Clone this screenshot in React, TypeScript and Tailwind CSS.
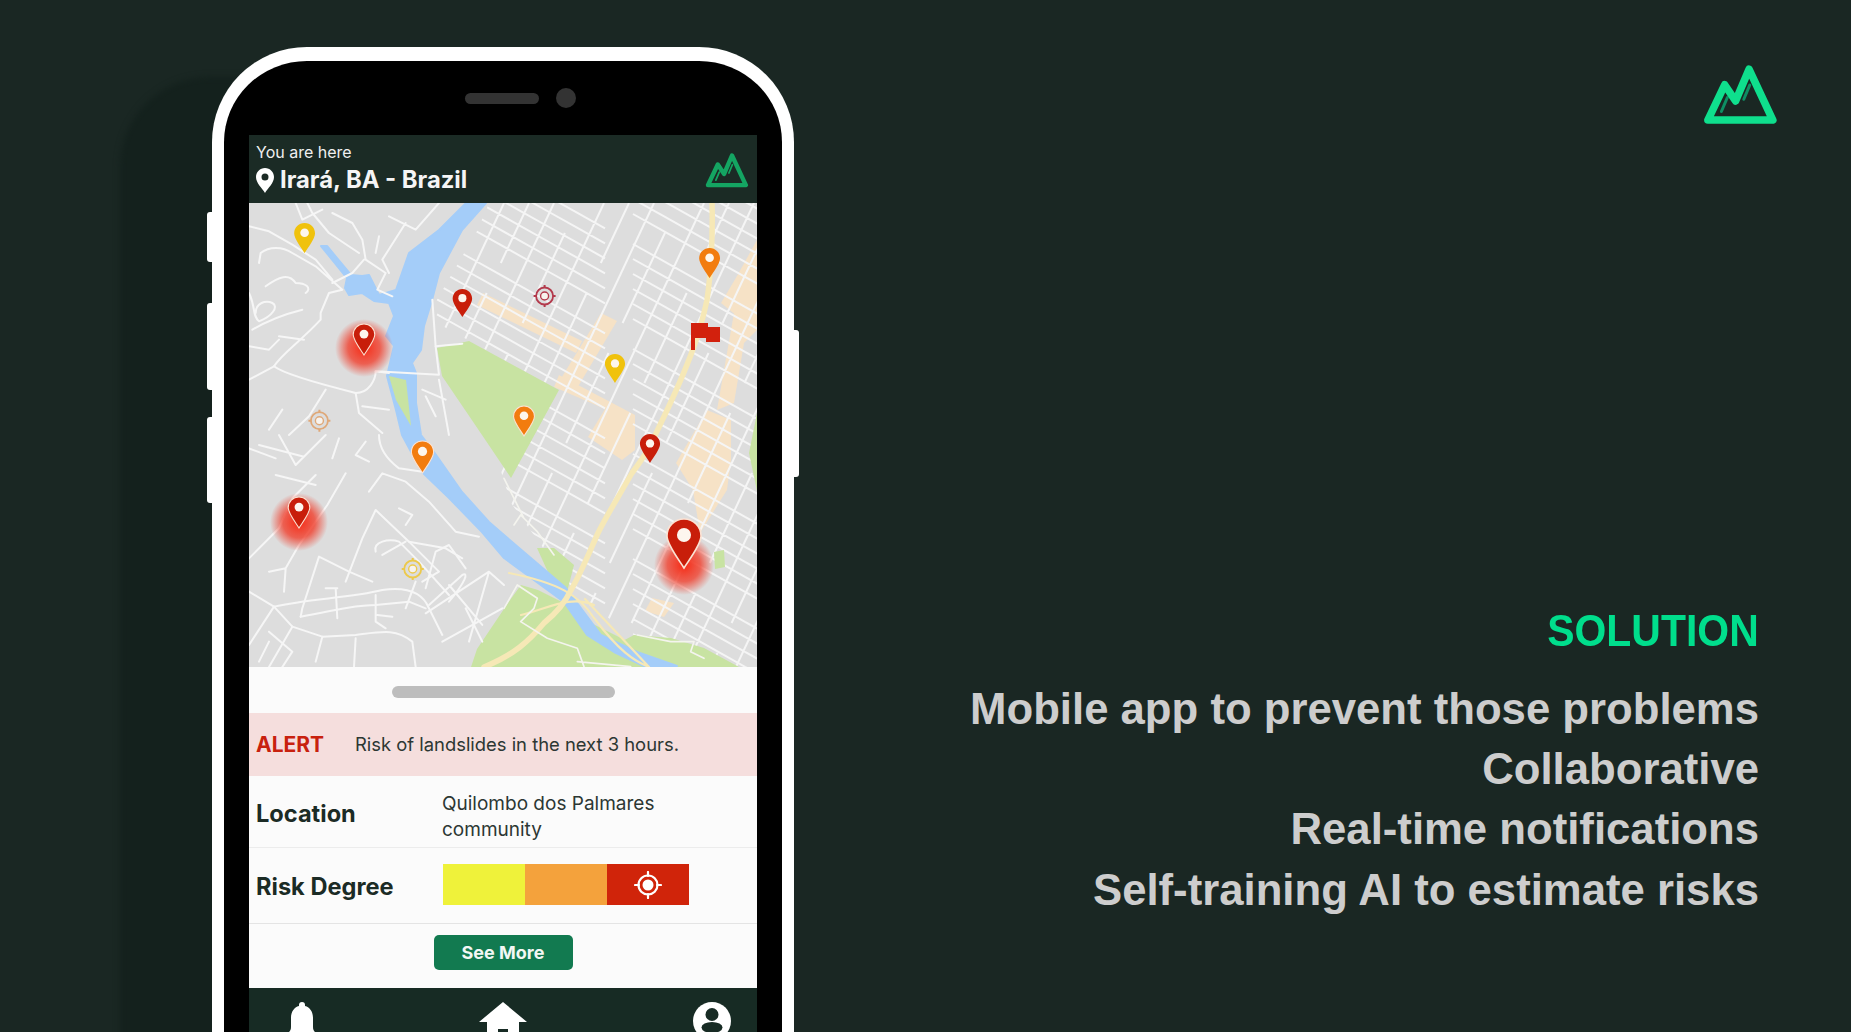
import { useMemo } from "react";

const LOGO_FONT = "font-['Liberation_Sans',Arial,sans-serif]";

const MountainLogo = ({ className, stroke, inner }: { className: string; stroke: string; inner: string }) => (
  <svg viewBox="68 44 224 182" className={className} fill="none">
    <path d="M122 185 140 143M190 148 208 105" stroke={inner} strokeWidth="9" strokeLinecap="round" />
    <path d="M81 211 132 104 165 153 206 57 278 211Z" stroke={stroke} strokeWidth="23" strokeLinejoin="round" />
  </svg>
);

type PinData = { x: number; top: number; tip: number; color: string; outline?: boolean; halo?: number };

// image coordinates minus map origin (249, 203)
const pins: PinData[] = [
  { x: 55.6, top: 20, tip: 50, color: "#f0c20c" },
  { x: 460.6, top: 45, tip: 75, color: "#f27c0f" },
  { x: 213.4, top: 86, tip: 114, color: "#c81e0a" },
  { x: 115, top: 121, tip: 152, color: "#c81e0a", outline: true, halo: 145 },
  { x: 366, top: 151, tip: 180, color: "#f0c20c" },
  { x: 275, top: 203, tip: 233, color: "#f27c0f", outline: true },
  { x: 173.5, top: 238, tip: 270, color: "#f27c0f", outline: true },
  { x: 401, top: 231, tip: 260, color: "#c81e0a" },
  { x: 50, top: 294, tip: 325, color: "#c81e0a", outline: true, halo: 319 },
];

const Pin = ({ x, top, tip, color, outline }: PinData) => {
  const h = tip - top;
  const s = h / 46;
  return (
    <g transform={`translate(${x - 16 * s} ${top}) scale(${s})`}>
      <path
        d="M16 0C7 0 0 7 0 16c0 8 11 22 16 30 5-8 16-22 16-30C32 7 25 0 16 0Z"
        fill={color}
        stroke={outline ? "#fbe3d4" : "none"}
        strokeWidth={outline ? 1.6 : 0}
      />
      <circle cx="16" cy="15" r="6.6" fill="#fdf6ee" />
    </g>
  );
};

const Target = ({ x, y, color }: { x: number; y: number; color: string }) => (
  <g transform={`translate(${x} ${y})`} fill="none" stroke={color}>
    <circle r="8.5" strokeWidth="1.8" />
    <circle r="4" fill="#f7f3ee" strokeWidth="1.4" />
    <path d="M0-11V-8M0 8V11M-11 0H-8M8 0H11" strokeWidth="2" />
  </g>
);

// the street grid east of the river, broken up so it does not look ruled
const useStreetGrid = () =>
  useMemo(() => {
    const out: string[] = [];
    for (let i = -34; i < 34; i++) {
      const c = i * 15 + 6;
      for (let j = 0; j < 14; j++) {
        if ((i * 7 + j * 13 + i * j) % 7 === 0) continue;
        const x1 = 160 + j * 28;
        const x2 = x1 + 28;
        out.push(`M${x1} ${(0.56 * x1 + c).toFixed(1)}L${x2} ${(0.56 * x2 + c).toFixed(1)}`);
      }
    }
    for (let i = 0; i < 36; i++) {
      const x0 = 230 + i * 25;
      for (let j = 0; j < 16; j++) {
        if ((i * 5 + j * 11 + i * j) % 4 === 0) continue;
        const y1 = j * 30;
        const y2 = y1 + 30;
        out.push(`M${(x0 - 0.47 * y1).toFixed(1)} ${y1}L${(x0 - 0.47 * y2).toFixed(1)} ${y2}`);
      }
    }
    return out.join("");
  }, []);

const MapView = () => {
  const grid = useStreetGrid();
  return (
    <svg viewBox="0 0 508 464" className="block h-[464px] w-[508px] blur-[0.5px]">
      <defs>
        <radialGradient id="halo">
          <stop offset="0%" stopColor="#f62a14" />
          <stop offset="55%" stopColor="#f0402e" stopOpacity="0.8" />
          <stop offset="100%" stopColor="#f0402e" stopOpacity="0" />
        </radialGradient>
        <clipPath id="town">
          <path d="M186 100 228 28 240 0H508V464H432L330 395 262 300 250 262 310 187 188 120Z" />
        </clipPath>
      </defs>
      <rect width="508" height="464" fill="#dddddd" />

      {/* blocks of town */}
      <g fill="#f6e2c6">
        <path d="M234 90 333 138 327 150 228 102Z" />
        <path d="M352 110 368 118 324 192 308 182Z" />
        <path d="M310 172 386 212 386 247 373 257 339 234 356 206 305 184Z" />
        <path d="M427 260 458 207 482 217 482 257 478 287 451 330 444 287Z" />
        <path d="M472 100 488 73 508 37V127L488 113Z" />
        <path d="M485 110 468 207 485 200 495 140 508 127V118Z" />
        <path d="M403 395 425 400 415 414 396 408Z" />
      </g>

      <path d={grid} clipPath="url(#town)" stroke="#f5f5f5" strokeWidth="2" fill="none" />

      {/* parks */}
      <g fill="#c8e3a2">
        <path d="M188 145 220 138 310 187 262 275 233 232 193 173Z" />
        <path d="M228 446 261 397 272 382 289 387 329 407 342 420 390 444 430 464H222Z" />
        <path d="M385 432 422 435 455 445 490 464H410L370 440Z" />
        <path d="M288 345 305 345 325 362 318 389 308 389Z" />
        <path d="M508 210 500 250 508 288Z" />
        <path d="M465 349 475 347 476 364 466 366Z" />
      </g>

      {/* river */}
      <path
        fill="#a4cdf9"
        stroke="#a4cdf9"
        strokeWidth="2"
        strokeLinejoin="round"
        d="M217 0H237L213 27 190 70 183 97 175 123 172 147 163 160 167 170V200L172 232 185 249 213 289 240 319 255 332 317 385 352 432 388 449 428 463H395L365 449 338 432 315 399 255 355 233 329 200 295 173 269 153 232 147 207 138 173 145 143 137 133 145 113 140 100 125 98 113 90 100 92 96 85 98 75 72 43H78L102 72 113 73 120 72 130 92 147 87 160 50 190 27Z"
      />
      <path fill="#c8e3a2" d="M140 173 157 177 162 223 147 197Z" />

      {/* highway and ramps */}
      <g fill="none" stroke="#f6e8b6" strokeLinecap="round">
        <path d="M463 0C464 30 462 70 458 97 452 125 444 154 410 224 398 250 392 258 383 270 368 296 358 312 349 330 340 350 332 370 322 387 315 402 305 412 295 420 280 438 265 452 235 464" strokeWidth="5.5" />
        <path d="M260 370C310 380 330 392 345 415 370 448 385 458 400 464M272 412C300 405 322 392 345 402M336 396 400 464" strokeWidth="2.2" />
      </g>

      {/* winding streets west of the river, traced from a 3x crop */}
      <g transform="scale(0.3333)" fill="none" stroke="#f6f6f6" strokeWidth="6" strokeLinecap="round" strokeLinejoin="round">
        <path d="M0 70 60 85 130 125 200 170 250 230M30 180 35 150C60 130 100 130 130 150L200 190 280 260 240 270 215 330V350C150 420 100 450 75 490L0 530" />
        <path d="M50 250C90 220 120 210 140 240 170 240 190 255 170 270M0 270C20 310 10 340 30 355 70 340 90 310 70 300 50 290 20 300 20 330" />
        <path d="M10 380C60 350 120 330 160 320M90 400 165 410M0 430 60 440 90 410" />
        <path d="M75 490C100 510 200 540 320 570 360 570 380 530 380 505L570 515M570 515 560 430 550 290" />
        <path d="M140 0 160 50 220 20M250 30 310 60 340 110 350 170 410 210 385 260 430 280M345 170 310 210 250 240M175 0 190 30 240 90 330 150" />
        <path d="M420 40 500 80 570 0M470 60 400 170 420 210M390 100 380 150M230 560 180 640 120 696M320 570 330 630 400 690M100 620 60 680M520 560 590 590M570 530 600 696M530 580 560 640M420 620 340 610" />
        <path d="M560 430 640 422M380 505 420 510" />
      </g>
      <g transform="translate(0 232) scale(0.3333)" fill="none" stroke="#f6f6f6" strokeWidth="6" strokeLinecap="round" strokeLinejoin="round">
        <path d="M0 370 90 280 130 190 200 120M80 120 200 150M0 40 80 70M30 30 165 65M90 0 140 90M230 0 140 90" />
        <path d="M290 115 235 210 150 330 110 400 60 410M110 400 105 470M350 20 320 60 360 80M270 10 250 70M390 0C390 40 410 70 450 100L520 110" />
        <path d="M360 170 400 115 470 140 540 200 620 290 690 305M210 365 160 520 155 545M210 365 300 410 370 440M290 440 340 310 380 225 480 320 570 410 520 440" />
        <path d="M380 350C370 320 420 310 450 320L510 380 600 480M400 360 470 320M450 220 490 240 470 270" />
        <path d="M0 470 75 515 130 575 220 605 320 600C400 590 440 580 490 620L500 696M75 515C180 490 300 490 400 465 470 455 520 470 540 520L580 600M155 545C250 530 300 510 380 510L480 500 530 520" />
        <path d="M75 515 0 630M130 575 60 696M260 460 265 550M230 460H265M60 590 130 650 100 696M30 680 60 620M220 605 200 680M320 610 315 696M380 480V560L410 580M385 540 430 545" />
        <path d="M530 535 720 410 765 450M580 620 760 520M650 520 700 620M600 450 700 570M720 410 660 620M540 510 640 420C660 410 650 440 600 500M480 320 590 340 640 370M530 460 560 350 600 330 650 400M500 440 470 520" />
      </g>
      <g transform="translate(255 232) scale(0.3333)" fill="none" stroke="#f4f4ee" strokeWidth="5" strokeLinecap="round" strokeLinejoin="round">
        <path d="M0 520 40 450 100 490 90 520 50 560 130 610 220 640 240 695M220 680 380 695M400 600 500 620 570 620 560 650 600 670" />
        <path d="M30 270 50 240 100 290 150 360M0 130 60 250" />
      </g>

      {/* pins */}
      {pins.filter((p) => p.halo).map((p) => (
        <circle key={`halo-${p.x}`} cx={p.x} cy={p.halo} r="29" fill="url(#halo)" />
      ))}
      <circle cx="435" cy="362" r="30" fill="url(#halo)" />
      <Target x={295.6} y={93} color="#b33a4c" />
      <Target x={70.4} y={217.7} color="#dfa878" />
      <Target x={163.7} y={366} color="#ecc94b" />
      {pins.map((p) => (
        <Pin key={`${p.x}-${p.top}`} {...p} />
      ))}
      <Pin x={435} top={316} tip={365} color="#c81e0a" outline />
      <path d="M442 120H459V124H471V139H457V135H446V147H442Z" fill="#d2210d" />
    </svg>
  );
};

const ScreenHeader = () => (
  <div className="flex h-[68px] items-start justify-between bg-[#1b2b25] pl-[7px] pr-[8px] pt-[8px]">
    <div className="flex flex-col">
      <span className="text-[16px] leading-[18px] text-[#f0f0f0]">You are here</span>
      <div className="mt-[5px] flex items-center gap-[6px]">
        <svg viewBox="0 0 18 25" className="h-[25px] w-[18px]">
          <path
            fillRule="evenodd"
            fill="#ffffff"
            d="M9 0C4 0 0 4 0 9c0 6 6 11 9 16 3-5 9-10 9-16 0-5-4-9-9-9Zm0 5.5a3.5 3.5 0 1 1 0 7 3.5 3.5 0 0 1 0-7Z"
          />
        </svg>
        <span className="text-[23.8px] font-bold leading-[28px] text-[#f5f5f5]">Irará, BA - Brazil</span>
      </div>
    </div>
    <MountainLogo className="mt-[10px] h-[35px] w-[44px]" stroke="#14a562" inner="#14a562" />
  </div>
);

const BottomNav = () => (
  <div className="flex h-[120px] items-start justify-between bg-[#172b24] pl-[38px] pr-[26px] pt-[14px]">
    <svg viewBox="0 0 30 46" className="h-[46px] w-[30px]" fill="#ffffff">
      <path d="M15 0a3 3 0 0 1 3 3v1c5 1 8 6 8 12v9c0 4 2 5 4 7v3H0v-3c2-2 4-3 4-7v-9C4 10 7 5 12 4V3a3 3 0 0 1 3-3Z" />
    </svg>
    <svg viewBox="0 0 48 46" className="mr-[5px] h-[46px] w-[48px]" fillRule="evenodd" fill="#ffffff">
      <path d="M24 0 48 20H40V46H8V20H0ZM19 27V46H29V27Z" />
    </svg>
    <svg viewBox="0 0 38 46" className="h-[46px] w-[38px]">
      <circle cx="19" cy="19" r="19" fill="#ffffff" />
      <circle cx="19" cy="12.5" r="6.5" fill="#172b24" />
      <ellipse cx="19" cy="25.5" rx="10.5" ry="5.5" fill="#172b24" />
    </svg>
  </div>
);

const AlertSheet = () => (
  <div className="flex flex-col bg-[#fbfbfb] text-[#2c3733]">
    <div className="flex h-[46px] items-center justify-center pt-[4px]">
      <div className="h-[12px] w-[223px] rounded-full bg-[#bdbdbd]" />
    </div>
    <div className="flex h-[63px] items-center bg-[#f5dedd] pl-[7px]">
      <span className="w-[99px] text-[21px] font-bold text-[#c8210e]">ALERT</span>
      <span className="pt-[1px] text-[18.4px]">Risk of landslides in the next 3 hours.</span>
    </div>
    <div className="flex h-[72px] items-center border-b border-[#ececec] pl-[7px]">
      <span className="w-[186px] pt-[4px] text-[23.6px] font-bold text-[#1b2b25]">Location</span>
      <span className="w-[260px] pt-[11px] text-[19px] leading-[26px]">Quilombo dos Palmares community</span>
    </div>
    <div className="flex h-[76px] items-start border-b border-[#e4e4e4] pl-[7px]">
      <span className="mt-[24px] w-[187px] text-[23.6px] font-bold leading-[30px] text-[#1b2b25]">Risk Degree</span>
      <div className="mt-[16px] flex h-[41px] w-[246px]">
        <div className="flex-1 bg-[#eff23a]" />
        <div className="flex-1 bg-[#f4a23c]" />
        <div className="flex flex-1 items-center justify-center bg-[#d0240a]">
          <svg viewBox="0 0 28 28" className="h-[28px] w-[28px]" fill="none" stroke="#ffffff">
            <circle cx="14" cy="14" r="9.5" strokeWidth="2.2" />
            <circle cx="14" cy="14" r="5.5" fill="#ffffff" stroke="none" />
            <path d="M14 1V5M14 23V27M1 14H5M23 14H27" strokeWidth="2.2" strokeLinecap="round" />
          </svg>
        </div>
      </div>
    </div>
    <div className="flex h-[64px] justify-center pt-[11px]">
      <button className="h-[35px] w-[139px] rounded-[5px] bg-[#127a50] text-[18px] font-bold text-[#f2f7f4]">
        See More
      </button>
    </div>
  </div>
);

const Phone = () => (
  <div className="relative z-10 ml-[212px] mt-[47px] h-[1150px] w-[582px] shrink-0 rounded-t-[95px] border-x-[12px] border-t-[14px] border-white bg-black font-['Inter',sans-serif]">
    <div className="flex h-[74px] items-start justify-center pl-[35px] pt-[32px]">
      <div className="mr-[17px] h-[11px] w-[74px] rounded-full bg-[#333333]" />
      <div className="-mt-[5px] h-[20px] w-[20px] rounded-full bg-[#333333]" />
    </div>
    <div className="ml-[25px] w-[508px]">
      <ScreenHeader />
      <MapView />
      <AlertSheet />
      <BottomNav />
    </div>
    {/* side buttons */}
    <div className="absolute -left-[17px] top-[151px] h-[50px] w-[6px] rounded-l-[3px] bg-white" />
    <div className="absolute -left-[17px] top-[242px] h-[87px] w-[6px] rounded-l-[3px] bg-white" />
    <div className="absolute -left-[17px] top-[356px] h-[86px] w-[6px] rounded-l-[3px] bg-white" />
    <div className="absolute -right-[17px] top-[269px] h-[147px] w-[6px] rounded-r-[3px] bg-white" />
  </div>
);

export default function App() {
  return (
    <div className="relative flex h-[1032px] w-[1851px] overflow-hidden bg-[#1a2723]">
      {/* soft shadow behind the phone */}
      <div className="absolute left-[120px] top-[77px] h-[1100px] w-[200px] rounded-tl-[90px] bg-[#14211d] blur-[3px]" />
      <Phone />
      <div className={`flex flex-1 flex-col items-end pr-[73px] pt-[65px] ${LOGO_FONT}`}>
        <MountainLogo className="h-[60px] w-[75px]" stroke="#0fdf8d" inner="#0d8f63" />
        <div className="mr-[19px] mt-[476px] flex flex-col items-end text-[43.7px] font-bold leading-[60px] text-[#cdcdcd]">
          <h2 className="mb-[18px] origin-right scale-x-[0.937] text-[#00de8c]">SOLUTION</h2>
          <p>Mobile app to prevent those problems</p>
          <p>Collaborative</p>
          <p>Real-time notifications</p>
          <p className="mt-[1px]">Self-training AI to estimate risks</p>
        </div>
      </div>
    </div>
  );
}
